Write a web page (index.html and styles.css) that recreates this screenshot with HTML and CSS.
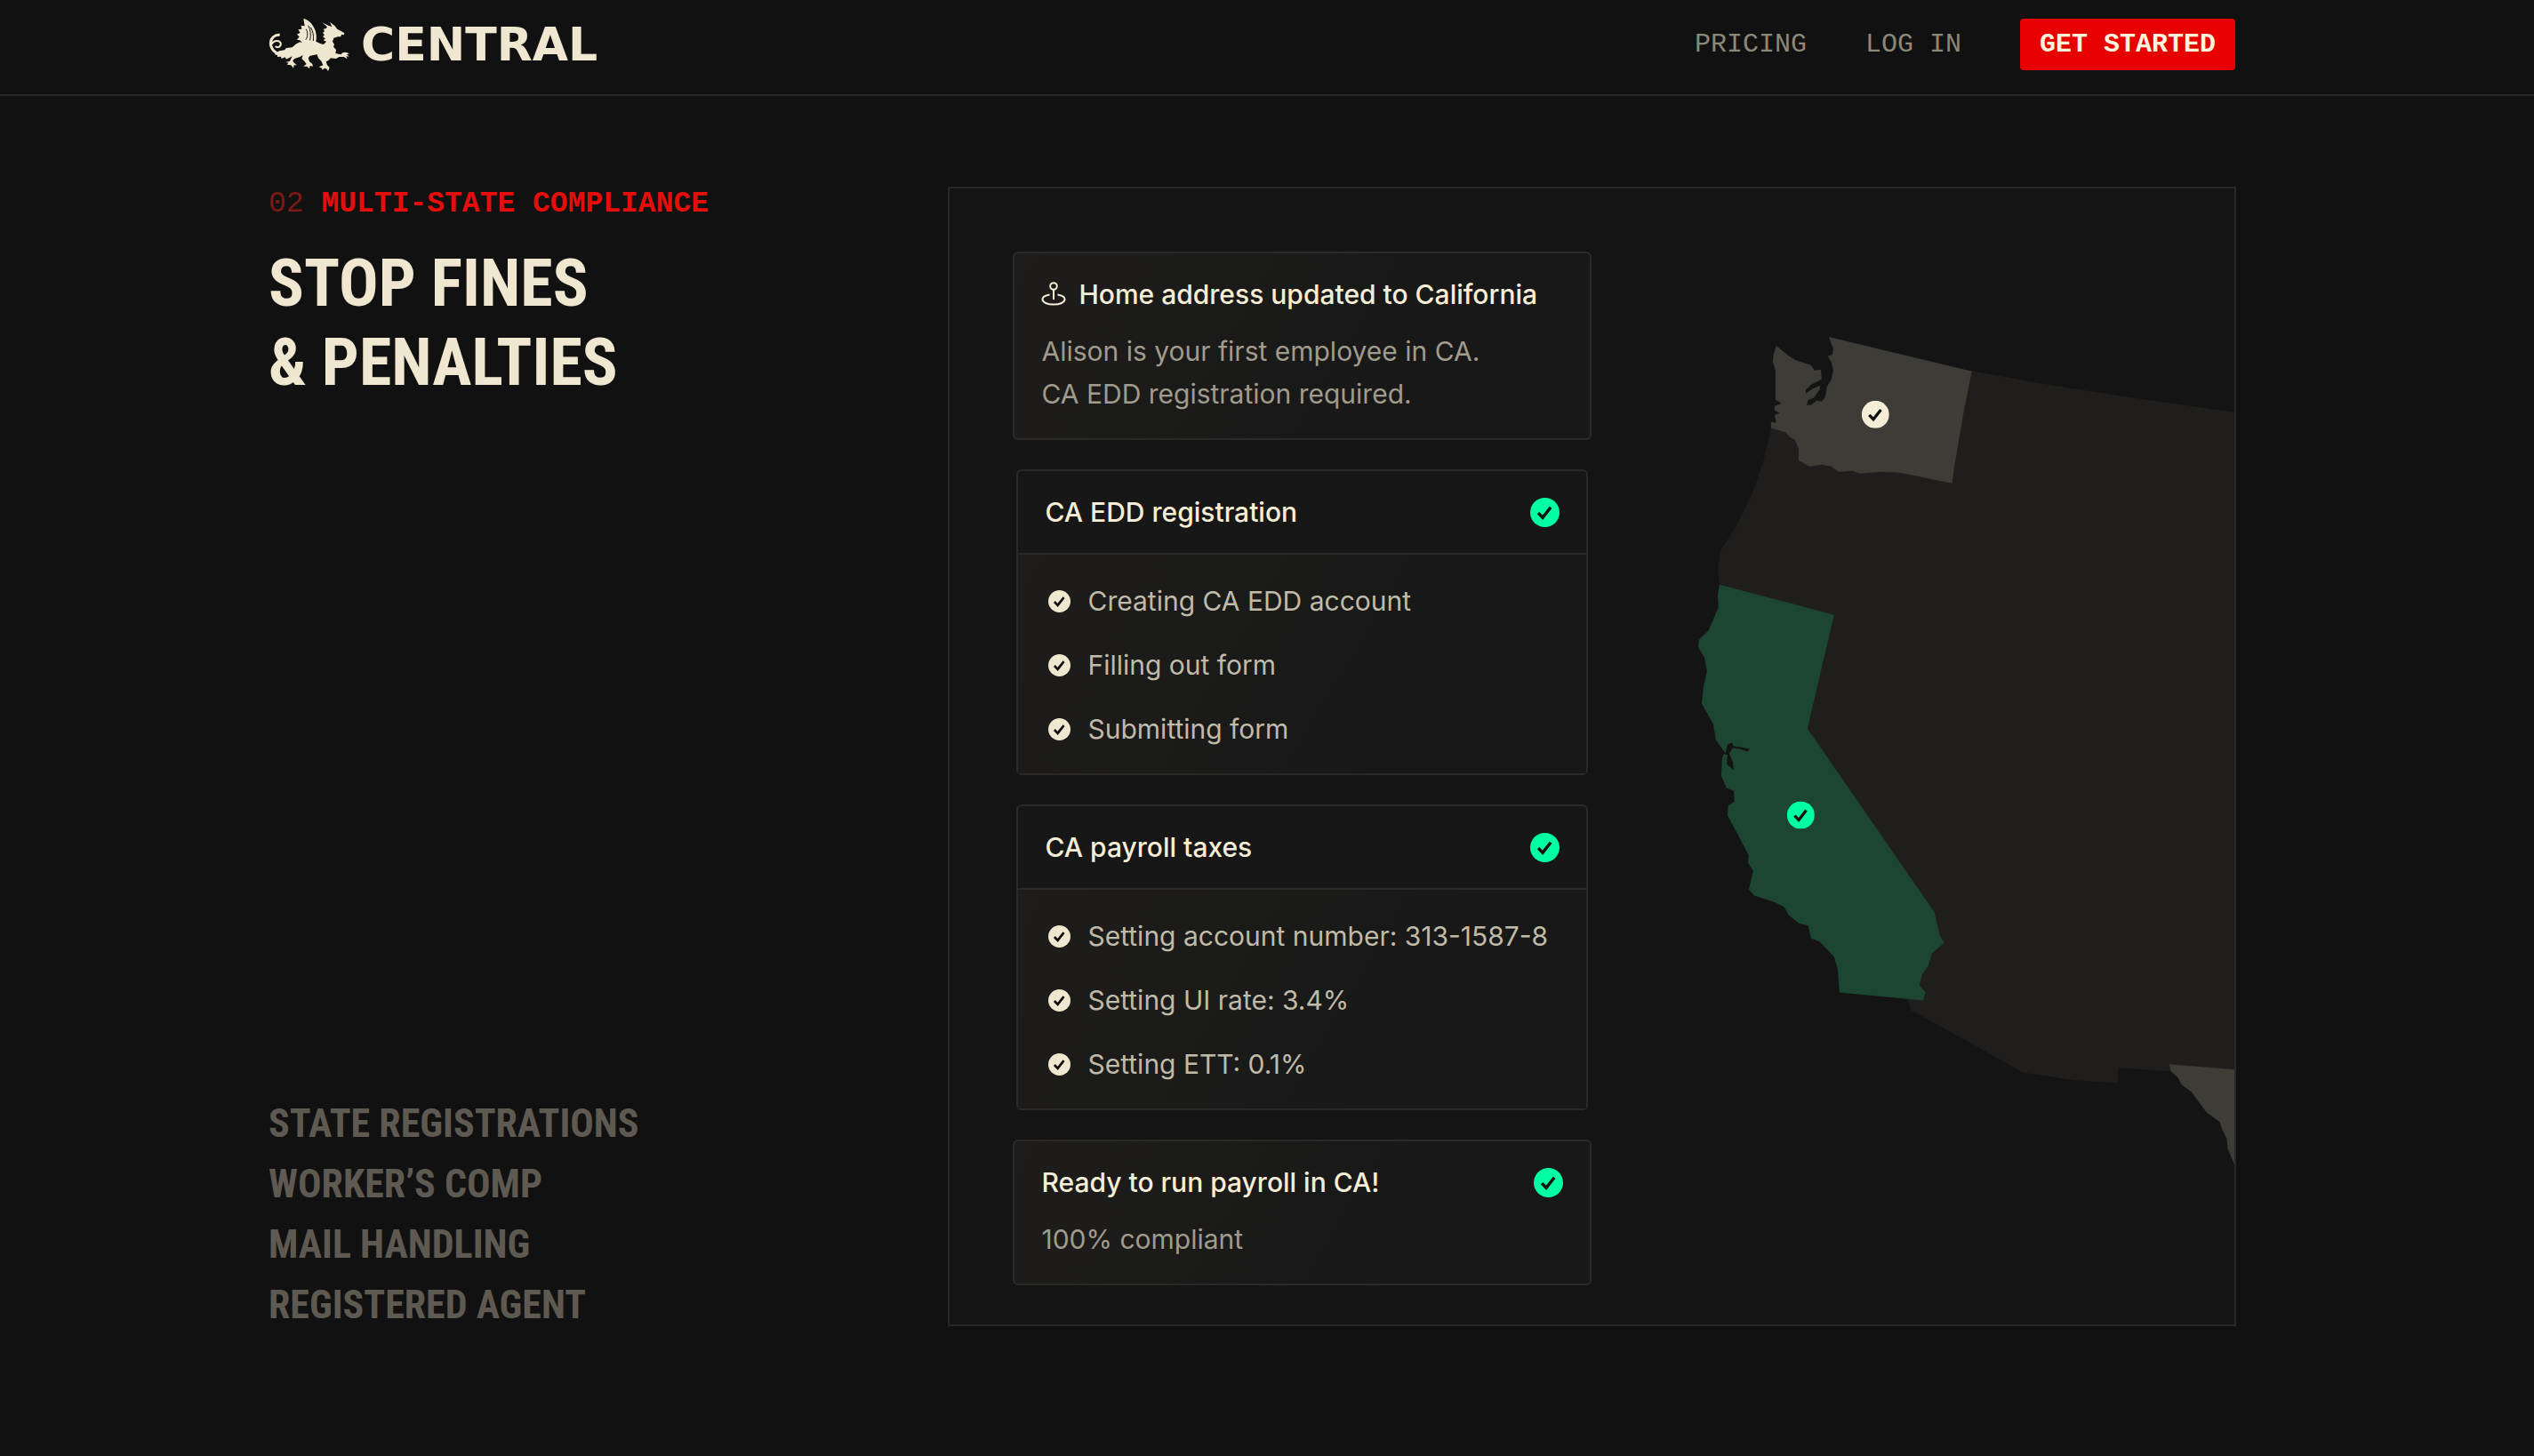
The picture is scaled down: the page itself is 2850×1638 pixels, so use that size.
FILE: index.html
```html
<!DOCTYPE html>
<html lang="en">
<head>
    <meta charset="UTF-8">
    <meta name="viewport" content="width=device-width, initial-scale=1.0">
    <title>Central - Multi-state compliance</title>
    <link rel="stylesheet" href="styles.css">
</head>
<body>
    <svg class="sprite" aria-hidden="true">
        <symbol id="check" viewBox="0 0 32 32">
            <circle cx="16" cy="16" r="16" fill="currentColor"/>
            <path d="M8.8 16.6l4.8 5L22.4 10.4" fill="none" stroke="#111111" stroke-width="3.4"/>
        </symbol>
    </svg>

    <header class="header">
        <a class="logo" href="#">
            <svg class="dragon" viewBox="12 12 276 180" aria-hidden="true">
                <path class="tail" d="M80 136C44 142 20 124 19 98C19 82 32 68 50 70"/>
                <path class="tail thin" d="M23 101C28 88 48 86 53 97C56 108 44 116 35 108"/>
                <path d="M48 124L66 121 72 114 92 112 106 100 118 94 126 97 118 88 108 86 116 76 108 68 119 62 112 52 124 50 122 38 134 40 130 15C146 18 160 32 168 50C174 64 175 80 172 92L188 100 198 102 207 92 197 88 204 82 195 76 201 70 195 63 201 58 197 50 206 48 210 43 193 28 214 38 226 42 219 26 236 40 244 50 258 58 268 64 266 70 258 68 256 76 246 76 232 80 228 92 234 102 231 110 240 120 238 132 256 136 262 130 272 128 285 133 276 136 284 143 274 142 278 151 266 144 250 144 240 150 222 148 214 156 206 160 210 172 218 180 213 192 207 184 201 182 194 188 192 182 182 178 196 172 190 158 180 148 176 136 152 140 146 148 150 160 160 168 162 176 152 174 150 184 142 176 130 176 140 168 134 160 124 150 128 138 118 144 100 150 94 156 96 162 108 172 98 172 96 182 88 172 74 170 80 164 70 162 84 158 88 150 92 142 72 152 68 145 56 150 54 143 42 144 42 138 32 136Z"/>
                <path class="vein" d="M146 38C154 52 156 68 152 88M154 44C162 58 165 70 163 90M139 50C146 64 144 76 138 86"/>
            </svg>
            <span>CENTRAL</span>
        </a>
        <nav class="nav">
            <a href="#">PRICING</a>
            <a href="#">LOG IN</a>
            <button type="button">GET STARTED</button>
        </nav>
    </header>

    <main class="feature">
        <div class="intro">
            <div>
                <p class="eyebrow"><span>02</span> MULTI-STATE COMPLIANCE</p>
                <h1>STOP FINES<br>&amp; PENALTIES</h1>
            </div>
            <ul class="services">
                <li>STATE REGISTRATIONS</li>
                <li>WORKER’S COMP</li>
                <li>MAIL HANDLING</li>
                <li>REGISTERED AGENT</li>
            </ul>
        </div>

        <div class="panel">
            <div class="cards">
                <section class="card note">
                    <div class="title">
                        <svg class="pin" viewBox="0 0 28 28" aria-hidden="true">
                            <circle cx="14" cy="5" r="3.8"/>
                            <path d="M14 9V20M9.5 14.6C4.6 15.5 1.5 17.3 1.5 19.8C1.5 23.2 7 25.6 14 25.6S26.5 23.2 26.5 19.8C26.5 17.3 23.4 15.5 18.5 14.6"/>
                        </svg>
                        <h2>Home address updated to California</h2>
                    </div>
                    <p>Alison is your first employee in CA.<br>CA EDD registration required.</p>
                </section>

                <section class="card steps">
                    <div class="title">
                        <h2>CA EDD registration</h2>
                        <svg class="done"><use href="#check"/></svg>
                    </div>
                    <ul>
                        <li><svg><use href="#check"/></svg>Creating CA EDD account</li>
                        <li><svg><use href="#check"/></svg>Filling out form</li>
                        <li><svg><use href="#check"/></svg>Submitting form</li>
                    </ul>
                </section>

                <section class="card steps">
                    <div class="title">
                        <h2>CA payroll taxes</h2>
                        <svg class="done"><use href="#check"/></svg>
                    </div>
                    <ul>
                        <li><svg><use href="#check"/></svg>Setting account number: 313-1587-8</li>
                        <li><svg><use href="#check"/></svg>Setting UI rate: 3.4%</li>
                        <li><svg><use href="#check"/></svg>Setting ETT: 0.1%</li>
                    </ul>
                </section>

                <section class="card note">
                    <div class="title">
                        <h2>Ready to run payroll in CA!</h2>
                        <svg class="done"><use href="#check"/></svg>
                    </div>
                    <p>100% compliant</p>
                </section>
            </div>

            <svg class="map" viewBox="1790 212 723 1279" preserveAspectRatio="xMaxYMin slice" aria-hidden="true">
                <!-- rest of the country -->
                <path class="land" d="M2210 416L2304 433 2394 447 2514 464V1206L2440 1206 2383 1202 2382 1219 2333 1216 2275 1207 2227 1180 2150 1137 2100 1000 1934 660 1932 643 1935 620 1954 590 1972 553 1984 517 1992 482 2060 470Z"/>
                <!-- Washington -->
                <path class="state" d="M1998 389L2011 400 2019 405 2037 411 2041 417 2048 416 2049 427 2043 430 2037 433 2031 439 2031 443 2038 438 2047 434 2047 438 2040 448 2034 450 2032 456 2037 456 2043 451 2049 452 2053 447 2055 435 2060 427 2062 417 2060 408 2056 401 2061 399 2062 392 2057 379 2218 418 2209 463 2198 527 2196 544 2137 532 2117 531 2092 533 2084 530 2068 531 2060 525 2049 523 2035 525 2023 518 2023 505 2019 495 2013 492 2009 487 2000 484 1992 482 1992 475 1998 476 1996 467 2002 465 1996 462 1996 457 2004 454 1997 450 1997 417 1994 407 1995 398Z"/>
                <!-- Texas -->
                <path class="state" d="M2440 1198L2514 1204V1312L2506 1293 2505 1282 2500 1272 2497 1263 2482 1252 2465 1229 2454 1221 2450 1213 2442 1206Z"/>
                <!-- California -->
                <path class="state active" d="M1934 658L2063 692 2033 820 2176 1027 2182 1053 2187 1061 2173 1073 2169 1087 2162 1097 2159 1109 2166 1117 2163 1126 2069 1117 2067 1090 2063 1077 2047 1060 2037 1056 2034 1042 2023 1039 2012 1030 2007 1021 1995 1015 1973 1008 1967 1001 1972 980 1966 971 1967 963 1955 940 1943 918 1944 907 1951 902 1950 890 1942 887 1936 873 1937 853 1940 847 1930 833 1927 815 1914 792 1916 773 1920 755 1917 740 1910 728 1911 720 1922 709 1933 683 1932 670Z"/>
                <path class="bay" d="M1938 848L1941 847 1943 838 1948 836 1950 840 1958 841 1968 843 1965 846 1957 843 1949 842 1945 848 1949 858 1950 867 1942 860 1943 850Z"/>
                <use class="cream" href="#check" x="2094" y="451" width="31" height="31"/>
                <use class="green" href="#check" x="2010" y="902" width="31" height="31"/>
            </svg>
        </div>
    </main>
</body>
</html>
```

FILE: styles.css
```css
* {
    box-sizing: border-box;
}
body {
    margin: 0;
    background: #111111;
    color: #f5edd6;
    font-family: Inter, "Liberation Sans", sans-serif;
    font-size: 30px;
    line-height: 48px;
}
h1, h2, p, ul {
    margin: 0;
    padding: 0;
}
ul {
    list-style: none;
}
a {
    color: inherit;
    text-decoration: none;
}
.sprite {
    display: none;
}

/* header */
.header {
    display: flex;
    align-items: center;
    justify-content: space-between;
    padding: 20px 336px 26px 302px;
    border-bottom: 2px solid #282828;
}
.logo {
    display: flex;
    align-items: center;
    gap: 12px;
    color: #f0e7d0;
    font-family: "DejaVu Sans", sans-serif;
    font-size: 52px;
    font-weight: bold;
    line-height: 58px;
}
.dragon {
    width: 92px;
    height: 60px;
    fill: #f0e7d0;
}
.tail {
    fill: none;
    stroke: #f0e7d0;
    stroke-width: 9;
}
.thin {
    stroke-width: 6;
}
.vein {
    fill: none;
    stroke: #111111;
    stroke-width: 3;
}
.nav {
    display: flex;
    align-items: center;
    gap: 66px;
    color: #8b887a;
    font-family: "Liberation Mono", monospace;
}
.nav button {
    height: 58px;
    padding: 0 22px;
    border: none;
    border-radius: 4px;
    background: #e60000;
    color: #fff3dc;
    font: bold 30px "Liberation Mono", monospace;
    cursor: pointer;
}

/* feature */
.feature {
    display: grid;
    grid-template-columns: minmax(0, 19fr) minmax(0, 36fr);
    padding: 102px 335px 144px 302px;
}
.intro {
    display: flex;
    flex-direction: column;
    justify-content: space-between;
}
.eyebrow {
    margin-bottom: 24px;
    color: #e60d0d;
    font-family: "Liberation Mono", monospace;
    font-size: 33px;
    font-weight: bold;
    line-height: 40px;
}
.eyebrow span {
    color: #7c1a17;
    font-weight: normal;
}
h1 {
    color: #f0e7d0;
    font-family: "Roboto Condensed", Roboto, "Liberation Sans", sans-serif;
    font-size: 74px;
    font-weight: bold;
    line-height: 89px;
}
.services {
    display: flex;
    flex-direction: column;
    gap: 20px;
    color: #5f5a51;
    font-family: "Roboto Condensed", Roboto, "Liberation Sans", sans-serif;
    font-size: 44px;
    font-weight: bold;
    line-height: 48px;
}

/* panel */
.panel {
    display: flex;
    border: 2px solid #282828;
    background: #141414;
}
.cards {
    display: flex;
    flex-direction: column;
    flex: none;
    gap: 33px;
    width: 722px;
    padding: 71px 0 43px 71px;
}
.card {
    border: 2px solid #2b2a28;
    border-radius: 6px;
    background: linear-gradient(120deg, #1e1d1b, #181818 70%);
}
.note {
    padding: 22px 30px 26px;
}
.steps {
    margin: 0 4px;
    background: #171717;
}
.title {
    display: flex;
    align-items: center;
    gap: 14px;
}
.title h2 {
    font-size: 30px;
    font-weight: 500;
}
.pin {
    width: 28px;
    height: 28px;
    fill: none;
    stroke: #f5edd6;
    stroke-width: 2;
}
.done {
    width: 33px;
    height: 33px;
    margin-left: auto;
    color: #00ffa3;
}
.note p {
    margin-top: 16px;
    color: #a09b8c;
}
.steps .title {
    padding: 22px 30px;
    border-bottom: 2px solid #2b2a28;
}
.steps ul {
    display: flex;
    flex-direction: column;
    gap: 24px;
    padding: 28px 30px 26px 34px;
    background: linear-gradient(120deg, #1e1d1b, #181818 70%);
    color: #c0baa8;
}
.steps li {
    display: flex;
    align-items: center;
    gap: 19px;
}
.steps li svg {
    width: 25px;
    height: 25px;
    color: #f0e7d0;
}

/* map */
.map {
    flex: 1;
    min-width: 0;
}
.land {
    fill: #1f1e1c;
}
.state {
    fill: #3d3c37;
}
.active {
    fill: #1c4632;
}
.bay {
    fill: #141414;
}
.cream {
    color: #f5edd6;
}
.green {
    color: #00ffa3;
}
```
